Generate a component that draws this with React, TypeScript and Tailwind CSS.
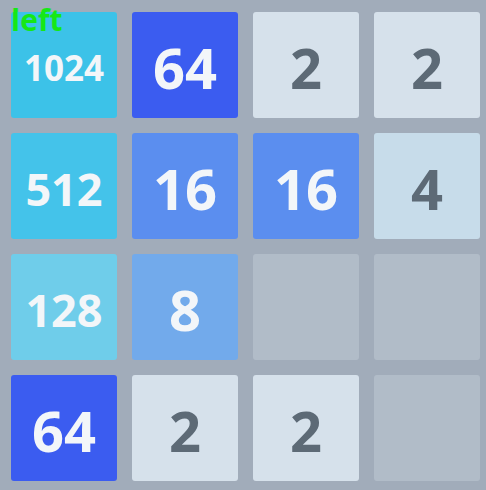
import React from "react";

type Tile = { v: number | null };

const board: (number | null)[][] = [
  [1024, 64, 2, 2],
  [512, 16, 16, 4],
  [128, 8, null, null],
  [64, 2, 2, null],
];

const styleFor = (v: number | null): string => {
  switch (v) {
    case 2:
      return "bg-[#d6e1eb] text-[#5d6a76] text-[56px]";
    case 4:
      return "bg-[#c7dcea] text-[#5d6a76] text-[56px]";
    case 8:
      return "bg-[#72aaeb] text-[#f3f6f9] text-[56px]";
    case 16:
      return "bg-[#5b8eef] text-[#f3f6f9] text-[56px]";
    case 64:
      return "bg-[#3b5cf0] text-[#f3f6f9] text-[56px]";
    case 128:
      return "bg-[#6fcdea] text-[#f3f6f9] text-[45px]";
    case 512:
      return "bg-[#44c3ea] text-[#f3f6f9] text-[45px]";
    case 1024:
      return "bg-[#3cc2e8] text-[#f3f6f9] text-[35px]";
    default:
      return "bg-[#b1bcc8]";
  }
};

function Cell({ v }: Tile) {
  return (
    <div
      className={`flex h-[106px] w-[106px] items-center justify-center rounded-[3px] pt-[4px] font-bold leading-none ${styleFor(v)}`}
    >
      {v ?? ""}
    </div>
  );
}

export default function App() {
  return (
    <div
      className="relative h-[490px] w-[486px] bg-[#a1acba] pl-[11px] pt-[12px]"
      style={{ fontFamily: '"Open Sans", "Liberation Sans", sans-serif' }}
    >
      <div className="grid grid-cols-[repeat(4,106px)] gap-[15px]">
        {board.flat().map((v, i) => (
          <Cell key={i} v={v} />
        ))}
      </div>
      <div className="absolute left-[11px] top-[0px] text-[30px] font-bold leading-[40px] text-[#16e816]">
        left
      </div>
    </div>
  );
}
